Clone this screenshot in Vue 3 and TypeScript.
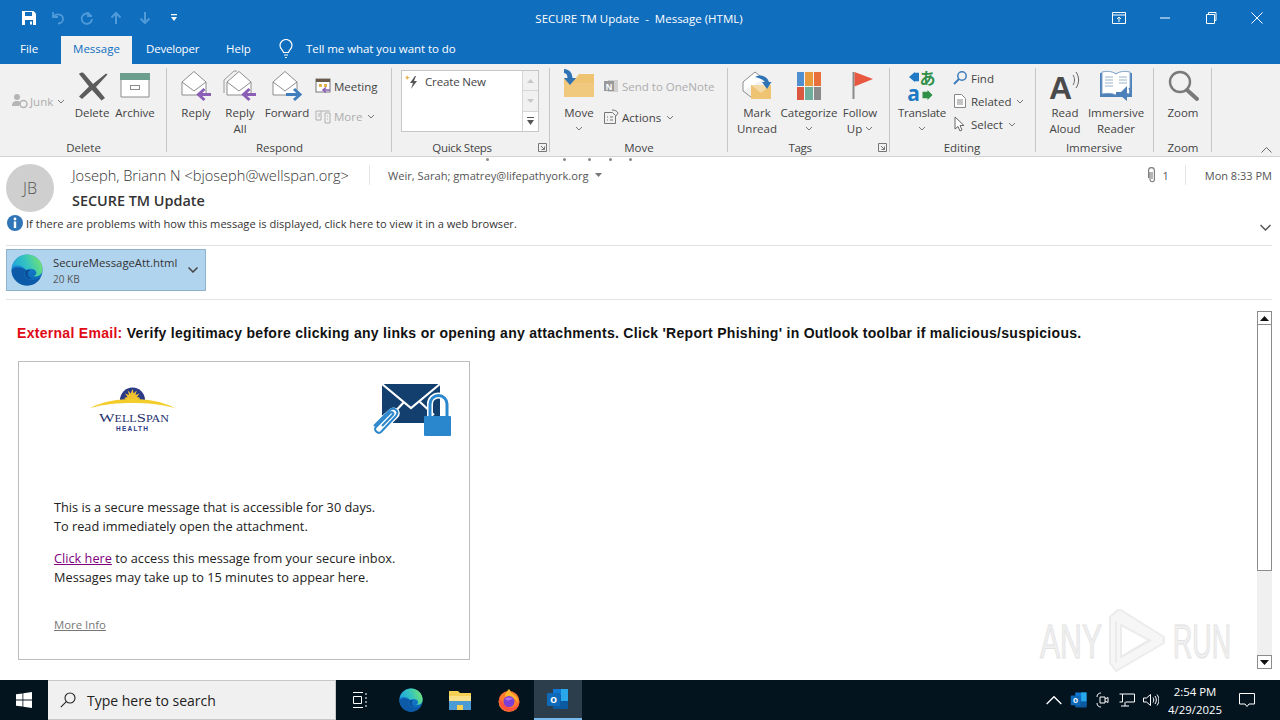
<template>
  <div class="outlook">
    <!-- shared artwork -->
    <svg class="defs" aria-hidden="true">
      <defs>
        <linearGradient id="edgeBase" x1="0" y1="0" x2="0.6" y2="1">
          <stop offset="0" stop-color="#1f9ae0" />
          <stop offset="1" stop-color="#0c66b8" />
        </linearGradient>
        <linearGradient id="edgeWave" x1="0" y1="0.6" x2="1" y2="0.3">
          <stop offset="0" stop-color="#1fa4dc" />
          <stop offset="0.5" stop-color="#35c4c0" />
          <stop offset="1" stop-color="#74e46e" />
        </linearGradient>
        <symbol id="edge" viewBox="0 0 32 32">
          <circle cx="16" cy="16" r="15.5" fill="url(#edgeBase)" />
          <path d="M.6 17C1 25 8 31.500 16 31.500c6 0 11-3 13.500-8-4 3-11 3.500-14.500.5-3-2.500-2.500-6 0-8-5.500-4-13.500-3.500-14.400.5z" fill="#0d5aa8" />
          <path d="M1 13C3 6 9 .5 16 .5c9 0 15.500 7 15.500 15 0 5-4.500 8-9 6.500 2.500-.5 3.500-2.500 2.500-4.500-1.500-3-6.500-3.500-10-1.500C12 12 6 10 1 13z" fill="url(#edgeWave)" />
          <path d="M15 16c-2 2-2 5.500.5 7.500 1.500 1.200 4 1.700 6.500 1.500-3-.5-5-2.500-5-5 0-1.800 1-3 2.500-4z" fill="#0b4f98" />
        </symbol>
        <symbol id="outlook" viewBox="0 0 24 24">
          <rect x="7" y="2" width="15" height="18" fill="#0f78d4" />
          <rect x="15" y="2" width="7" height="6" fill="#28a8ea" />
          <rect x="7" y="8" width="8" height="6" fill="#0a63b0" />
          <rect x="15" y="8" width="7" height="6" fill="#28a8ea" />
          <path d="M7 14h15v8H7z" fill="#0b5a9f" />
          <rect x="1" y="6" width="13" height="13" rx="1" fill="#0e69b8" />
          <text x="7.500" y="16.200" text-anchor="middle" class="outlook-o">o</text>
        </symbol>
      </defs>
    </svg>

    <!-- title bar -->
    <header class="titlebar">
      <div class="qat">
        <svg class="qat-icon" viewBox="0 0 16 16"><path d="M1 1h11.500L15 3.500V15H1z" fill="#fff" /><path d="M4 2h7v4H4zM4 10h8v5H4z" fill="#106ebe" /><path d="M9 11.500h2v3H9z" fill="#fff" /></svg>
        <svg class="qat-icon" viewBox="0 0 16 16" fill="none" stroke="#4f9ad8" stroke-width="1.800"><path d="M3 2v5h5" /><path d="M3.500 6.500C6 3.500 13 3.500 13 9c0 3-2.500 4.500-5 4.500" /></svg>
        <svg class="qat-icon" viewBox="0 0 16 16" fill="none" stroke="#4f9ad8" stroke-width="1.800"><path d="M9 2v4h4" /><path d="M11.500 5A5.200 5.200 0 1 0 13 9" /></svg>
        <svg class="qat-icon" viewBox="0 0 16 16" fill="none" stroke="#4f9ad8" stroke-width="2"><path d="M8 14V3M3.500 7.500 8 3l4.500 4.500" /></svg>
        <svg class="qat-icon" viewBox="0 0 16 16" fill="none" stroke="#4f9ad8" stroke-width="2"><path d="M8 2v11M3.500 8.500 8 13l4.500-4.500" /></svg>
        <svg class="qat-icon qat-last" viewBox="0 0 16 16"><path d="M5 4h6v1.200H5zM5 7h6L8 11z" fill="#fff" /></svg>
      </div>
      <div class="title">SECURE TM Update&nbsp; -&nbsp; Message (HTML)</div>
      <div class="winctl">
        <svg class="win-icon" viewBox="0 0 14 12" fill="none" stroke="#fff"><path d="M.5.500h13v11H.5zM.5 3h13M7 10V5M5 7l2-2 2 2" /></svg>
        <svg class="win-icon" viewBox="0 0 14 12" fill="none" stroke="#fff"><path d="M2 6h10" /></svg>
        <svg class="win-icon" viewBox="0 0 14 12" fill="none" stroke="#fff"><path d="M2.500 2.500h8v9h-8zM4.500 2.500V.5h7.500v8h-1.500" /></svg>
        <svg class="win-icon" viewBox="0 0 14 12" fill="none" stroke="#fff"><path d="M1.500.5 12.500 11.500M12.500.5 1.500 11.500" /></svg>
      </div>
    </header>

    <!-- tabs -->
    <nav class="tabs">
      <span class="tab tab-file">File</span>
      <span class="tab tab-active">Message</span>
      <span class="tab tab-dev">Developer</span>
      <span class="tab tab-help">Help</span>
      <svg class="bulb" viewBox="0 0 16 20" fill="none" stroke="#fff" stroke-width="1.200"><path d="M5.500 13.500C5 11 2 9.500 2 6.500a6 6 0 0 1 12 0c0 3-3 4.500-3.500 7zM6 16h4M7 18.500h2" /></svg>
      <span class="tab tell">Tell me what you want to do</span>
    </nav>

    <!-- ribbon -->
    <section class="ribbon">
      <div class="group g-delete">
        <div class="g-body">
          <div class="small off junk">
            <svg class="s-icon" viewBox="0 0 16 16" fill="#b5b5b5"><circle cx="5" cy="4" r="3" /><path d="M0 13c0-4 2-5 5-5 2 0 3 .5 4 1.500L7 13z" /><circle cx="11.500" cy="11" r="3.500" fill="none" stroke="#b5b5b5" stroke-width="1.500" /></svg>
            <span>Junk</span><svg class="caret" viewBox="0 0 8 5"><path d="M1 1l3 3 3-3" /></svg>
          </div>
          <div class="big w-delete">
            <svg class="b-icon" viewBox="0 0 34 34"><path d="M4 5c2-2 4-2 5-.5l9 10.500L31 4.500l1.500 1L21 18l9 11-3.500 2.500L17 21 7 30l-3-2.500L14 17.500z" fill="#5c5c5c" /></svg>
            <span class="lbl">Delete</span>
          </div>
          <div class="big w-archive">
            <svg class="b-icon" viewBox="0 0 34 34"><rect x="2" y="4" width="30" height="7" fill="#6b9e8c" /><path d="M3 11v17h28V11" fill="#fff" stroke="#8a8a8a" /><rect x="12.500" y="16.500" width="9" height="4" fill="none" stroke="#8a8a8a" /></svg>
            <span class="lbl">Archive</span>
          </div>
        </div>
        <div class="g-label">Delete</div>
      </div>

      <div class="group g-respond">
        <div class="g-body">
          <div class="big w-reply">
            <svg class="b-icon" viewBox="0 0 34 34"><path d="M3 26V13L15 2.500 27 13v13z" fill="#fff" stroke="#8d8d8d" /><path d="M3 13l12 9 12-9" fill="none" stroke="#8d8d8d" /><path d="M32 25.500H20M25.500 20l-6 5.500 6 5.500" fill="none" stroke="#8a5fb5" stroke-width="3" /></svg>
            <span class="lbl">Reply</span>
          </div>
          <div class="big w-reply">
            <svg class="b-icon" viewBox="0 0 34 34"><path d="M1 24V11L11 2l3 0" fill="none" stroke="#9a9a9a" /><path d="M4 26V13L16 2.500 28 13v13z" fill="#fff" stroke="#8d8d8d" /><path d="M4 13l12 9 12-9" fill="none" stroke="#8d8d8d" /><path d="M33 25.500H21M26.500 20l-6 5.500 6 5.500" fill="none" stroke="#8a5fb5" stroke-width="3" /></svg>
            <span class="lbl">Reply<br />All</span>
          </div>
          <div class="big w-forward">
            <svg class="b-icon" viewBox="0 0 34 34"><path d="M3 26V13L15 2.500 27 13v13z" fill="#fff" stroke="#8d8d8d" /><path d="M3 13l12 9 12-9" fill="none" stroke="#8d8d8d" /><path d="M16 25.500h13M24 20l6 5.500-6 5.500" fill="none" stroke="#3f7dbd" stroke-width="3" /></svg>
            <span class="lbl">Forward</span>
          </div>
          <div class="s-col s-col-respond">
            <div class="small">
              <svg class="s-icon" viewBox="0 0 16 16"><rect x="1" y="1" width="14" height="13" fill="#fff" stroke="#777" /><rect x="1" y="1" width="14" height="3" fill="#6a5a4a" /><path d="M4 6h3v3H4zM9 6h3v3H9z" fill="#e6b04a" /><path d="M15 12H8M11 9.500 8 12l3 2.500" fill="none" stroke="#8a5fb5" stroke-width="1.600" /></svg>
              <span>Meeting</span>
            </div>
            <div class="small off">
              <svg class="s-icon" viewBox="0 0 16 16" fill="none" stroke="#b0b0b0"><path d="M1 3h14M1 3v9h5V3M10 5h5v10h-5zM3 6h2M3 8h2M12 8h1M12 11h1" /></svg>
              <span>More</span><svg class="caret" viewBox="0 0 8 5"><path d="M1 1l3 3 3-3" /></svg>
            </div>
          </div>
        </div>
        <div class="g-label">Respond</div>
      </div>

      <div class="group g-quick">
        <div class="g-body">
          <div class="gallery">
            <div class="gallery-list">
              <svg class="bolt" viewBox="0 0 16 16"><path d="M2 1l1 2 2 .5-2 1L2 6l-.5-1.500L0 3.500l1.500-.5z" fill="#e8b04a" /><path d="M10 2 5 9h3l-2 6 6-8H9l2-5z" fill="#555" /></svg>
              <span>Create New</span>
            </div>
            <div class="gallery-scroll">
              <span class="gs-btn"><svg viewBox="0 0 7 4"><path d="M0 4l3.500-4L7 4z" fill="#c8c8c8" /></svg></span>
              <span class="gs-btn"><svg viewBox="0 0 7 4"><path d="M0 0l3.500 4L7 0z" fill="#c8c8c8" /></svg></span>
              <span class="gs-btn"><svg viewBox="0 0 7 8"><path d="M0 0h7v1H0zM0 3h7L3.500 8z" fill="#555" /></svg></span>
            </div>
          </div>
        </div>
        <div class="g-label g-label-launch">Quick Steps</div>
        <svg class="launcher" viewBox="0 0 9 9" fill="none" stroke="#777"><path d="M.5 8.500V.5h8v8zM3 3l3.500 3.500M6.500 3.500v3h-3" /></svg>
      </div>

      <div class="group g-move">
        <div class="g-body">
          <div class="big w-move">
            <svg class="b-icon" viewBox="0 0 34 34"><path d="M2 9h12l3-4h15v23H2z" fill="#eec372" /><path d="M2 14h30v14H2z" fill="#f0c97f" /><path d="M2 0c6 .5 8 4 8.500 9H14l-6 7-6-7h3.500C5.500 6 4.500 4.500 2 4z" fill="#2f73b5" /></svg>
            <span class="lbl">Move<br /><svg class="caret" viewBox="0 0 8 5"><path d="M1 1l3 3 3-3" /></svg></span>
          </div>
          <div class="s-col s-col-move">
            <div class="small off">
              <svg class="s-icon" viewBox="0 0 16 16"><rect x="5" y="2" width="10" height="12" fill="#d0d0d0" /><rect x="1" y="3" width="10" height="10" fill="#9a9a9a" /><text x="6" y="11.500" text-anchor="middle" class="note-n">N</text></svg>
              <span>Send to OneNote</span>
            </div>
            <div class="small">
              <svg class="s-icon" viewBox="0 0 16 16" fill="none" stroke="#777"><path d="M1.500 3.500h8l3 3v8h-11zM4 8h1M7 8h3M4 11h1M7 11h3" /><path d="M9 1c3 0 5 1 6 3l-2 3" /></svg>
              <span>Actions</span><svg class="caret" viewBox="0 0 8 5"><path d="M1 1l3 3 3-3" /></svg>
            </div>
          </div>
        </div>
        <div class="g-label">Move</div>
      </div>

      <div class="group g-tags">
        <div class="g-body">
          <div class="big w-mark">
            <svg class="b-icon" viewBox="0 0 34 34"><path d="M3 22V13L15 3l9 7" fill="#fff" stroke="#8d8d8d" /><path d="M3 22l8 6" stroke="#8d8d8d" /><path d="M11 16h20v14H11z" fill="#eec372" /><path d="M11 16l10 8 10-8" fill="#f5d9a5" /><path d="M15 8c6-3 12-1 14 5h2.500L27 20l-5-7h3c-1.500-2.500-5-3.500-10-5z" fill="#2f73b5" /></svg>
            <span class="lbl">Mark<br />Unread</span>
          </div>
          <div class="big w-cat">
            <div class="cat-grid"><i v-for="c in categoryColours" :key="c" :style="{ background: c }" /></div>
            <span class="lbl">Categorize<br /><svg class="caret" viewBox="0 0 8 5"><path d="M1 1l3 3 3-3" /></svg></span>
          </div>
          <div class="big w-follow">
            <svg class="b-icon" viewBox="0 0 34 34"><path d="M9.500 3h2v27h-2z" fill="#8a8a8a" /><path d="M11.500 3 30 10l-18.500 7.500z" fill="#e8573f" /></svg>
            <span class="lbl">Follow<br />Up <svg class="caret" viewBox="0 0 8 5"><path d="M1 1l3 3 3-3" /></svg></span>
          </div>
        </div>
        <div class="g-label g-label-launch">Tags</div>
        <svg class="launcher launcher-tags" viewBox="0 0 9 9" fill="none" stroke="#777"><path d="M.5 8.500V.5h8v8zM3 3l3.500 3.500M6.500 3.500v3h-3" /></svg>
      </div>

      <div class="group g-edit">
        <div class="g-body">
          <div class="big w-translate">
            <div class="tr-icon">
              <svg class="tr-arrow" viewBox="0 0 12 12"><path d="M12 1v10H7v1L0 6l7-6v1z" fill="#1f79c4" /></svg>
              <span class="tr-jp">あ</span>
              <span class="tr-a">a</span>
              <svg class="tr-arrow tr-arrow-low" viewBox="0 0 12 12"><path d="M0 2h6V0l6 6-6 6v-2H0z" fill="#2f8f46" /></svg>
            </div>
            <span class="lbl lbl-tight">Translate<br /><svg class="caret" viewBox="0 0 8 5"><path d="M1 1l3 3 3-3" /></svg></span>
          </div>
          <div class="s-col s-col-edit">
            <div class="small">
              <svg class="s-icon" viewBox="0 0 16 16" fill="none"><circle cx="10" cy="6" r="4.200" stroke="#3f7dbd" stroke-width="1.500" /><path d="M7 9l-5 5" stroke="#3f7dbd" stroke-width="2" /></svg>
              <span>Find</span>
            </div>
            <div class="small">
              <svg class="s-icon" viewBox="0 0 16 16" fill="#fff" stroke="#888"><path d="M2.500 1.500h7l4 4v9h-11z" /><path d="M5 7h6M5 9h6M5 11h6" fill="none" /></svg>
              <span>Related</span><svg class="caret" viewBox="0 0 8 5"><path d="M1 1l3 3 3-3" /></svg>
            </div>
            <div class="small">
              <svg class="s-icon" viewBox="0 0 16 16" fill="#fff" stroke="#666"><path d="M3 1v12l3-2.500 2 4.500 2-1-2-4.500h4z" /></svg>
              <span>Select</span><svg class="caret" viewBox="0 0 8 5"><path d="M1 1l3 3 3-3" /></svg>
            </div>
          </div>
        </div>
        <div class="g-label g-label-edit">Editing</div>
      </div>

      <div class="group g-imm">
        <div class="g-body">
          <div class="big w-read">
            <div class="read-icon">
              <span class="read-a">A</span>
              <svg class="read-waves" viewBox="0 0 8 20" fill="none" stroke="#666"><path d="M1 5c2 3 2 7 0 10M4 2c3.500 5 3.500 11 0 16" /></svg>
            </div>
            <span class="lbl">Read<br />Aloud</span>
          </div>
          <div class="big w-imm">
            <svg class="b-icon" viewBox="0 0 34 34">
              <path d="M1 4h32v24H1z" fill="#4d80b8" />
              <path d="M3 3c5-1 10-1 14 2 4-3 9-3 14-2v22c-5-1-10-1-14 1-4-2-9-2-14-1z" fill="#fff" stroke="#7da2c9" />
              <path d="M6 8h8M6 11h8M6 14h8M6 17h8M20 8h8M20 11h8M20 14h8" stroke="#9ab1c9" />
              <path d="M17 23h5l6-6v15l-6-5h-5z" fill="#4d80b8" />
              <path d="M30 19c1.500 2 1.500 5 0 8" fill="none" stroke="#4d80b8" stroke-width="1.400" />
            </svg>
            <span class="lbl">Immersive<br />Reader</span>
          </div>
        </div>
        <div class="g-label g-label-edit">Immersive</div>
      </div>

      <div class="group g-zoom">
        <div class="g-body">
          <div class="big w-zoom">
            <svg class="b-icon" viewBox="0 0 34 34" fill="none"><circle cx="14" cy="13" r="10" stroke="#7a7a7a" stroke-width="2.400" /><path d="M21 21l10 9" stroke="#7a7a7a" stroke-width="4" stroke-linecap="round" /></svg>
            <span class="lbl">Zoom</span>
          </div>
        </div>
        <div class="g-label">Zoom</div>
      </div>

      <svg class="collapse" viewBox="0 0 11 6" fill="none" stroke="#666"><path d="M.5 5.500l5-5 5 5" /></svg>
    </section>

    <!-- message header -->
    <section class="msg-head">
      <i v-for="x in stray" :key="x" class="stray" :style="{ left: x + 'px' }" />
      <div class="head-top">
        <div class="avatar">JB</div>
        <div class="head-main">
          <div class="head-line">
            <span class="sender">Joseph, Briann N &lt;bjoseph@wellspan.org&gt;</span>
            <span class="rule" />
            <span class="recip">Weir, Sarah; gmatrey@lifepathyork.org</span>
            <svg class="tri" viewBox="0 0 7 4"><path d="M0 0h7L3.500 4z" fill="#777" /></svg>
            <span class="head-right">
              <svg class="clip" viewBox="0 0 10 16" fill="none" stroke="#777" stroke-width="1.100"><path d="M3 5v7.500a2.200 2.200 0 0 0 4.400 0V3.500a2.800 2.800 0 0 0-5.800 0V11M5 5v7" /></svg>
              <span class="count">1</span>
              <span class="rule" />
              <span class="date">Mon 8:33 PM</span>
            </span>
          </div>
          <div class="subject">SECURE TM Update</div>
        </div>
      </div>
      <div class="info">
        <svg class="info-icon" viewBox="0 0 16 16"><circle cx="8" cy="8" r="8" fill="#2f75b8" /><circle cx="8" cy="4" r="1.400" fill="#fff" /><path d="M6.800 6.500h2.400V13H6.800z" fill="#fff" /></svg>
        <span>If there are problems with how this message is displayed, click here to view it in a web browser.</span>
        <svg class="expand" viewBox="0 0 11 7" fill="none" stroke="#555" stroke-width="1.500"><path d="M.5 1l5 5 5-5" /></svg>
      </div>
    </section>

    <section class="attach-row">
      <div class="attach">
        <svg class="attach-icon"><use href="#edge" /></svg>
        <div class="attach-text">
          <div class="attach-name">SecureMessageAtt.html</div>
          <div class="attach-size">20 KB</div>
        </div>
        <svg class="attach-caret" viewBox="0 0 10 6" fill="none" stroke="#444" stroke-width="1.500"><path d="M.5.500l4.500 4.500L9.500.5" /></svg>
      </div>
    </section>

    <!-- message body -->
    <main class="body">
      <div class="content">
        <p class="warn"><b>External Email:</b> Verify legitimacy before clicking any links or opening any attachments. Click 'Report Phishing' in Outlook toolbar if malicious/suspicious.</p>
        <div class="card">
          <div class="card-head">
            <svg class="logo" viewBox="0 0 86 48">
              <path d="M30 15a12.500 12.500 0 0 1 25 0z" fill="#2b3a86" />
              <path d="M42.500 4l1.200 4.500 3-3-1.200 4.500 4-1.500-2.500 3.500 3 .8-.5 1.200H35l-.5-1.200 3-.8-2.500-3.500 4 1.500-1.200-4.500 3 3z" fill="#f2c12e" />
              <path d="M0 23C14 16 28 14 42.500 14S71 16 85 23C70 19 57 18 42.500 18S15 19 0 23z" fill="#f3cd2b" />
              <text x="9" y="37" textLength="70" lengthAdjust="spacingAndGlyphs" class="logo-name"><tspan class="logo-cap">W</tspan>ELL<tspan class="logo-cap">S</tspan>PAN</text>
              <text x="26" y="45.500" textLength="32" class="logo-health">HEALTH</text>
            </svg>
            <svg class="secure-art" viewBox="0 0 80 53">
              <rect x="10" y="1" width="58" height="39" fill="#123f6d" />
              <path d="M10 1l29 24 29-24M20 32l12-13M48 19l14 13" fill="none" stroke="#fff" stroke-width="2.200" />
              <path d="M1 44 19 28c3-3 9 1 5 5L9 48c-3 2.500-7-1-4-4l14-14" fill="none" stroke="#fff" stroke-width="5" />
              <path d="M2 43 18 27c4-3 10 1 6 6L9 49c-3 2.500-8-2-5-5l14-14c2-2 4 0 3 1.500L10 43" fill="none" stroke="#2b87cd" stroke-width="2" />
              <path d="M58 33V21a8.500 8.500 0 0 1 17 0v12" fill="none" stroke="#fff" stroke-width="6" />
              <path d="M58 33V21a8.500 8.500 0 0 1 17 0v12" fill="none" stroke="#2b87cd" stroke-width="3" />
              <rect x="52" y="33" width="27" height="20" rx="1" fill="#2b87cd" />
            </svg>
          </div>
          <div class="card-text">
            <p>This is a secure message that is accessible for 30 days.<br />To read immediately open the attachment.</p>
            <p class="p2"><a class="link">Click here</a> to access this message from your secure inbox.<br />Messages may take up to 15 minutes to appear here.</p>
            <p class="more"><a>More Info</a></p>
          </div>
        </div>
      </div>
      <div class="scrollbar">
        <span class="sb-btn"><svg viewBox="0 0 9 5"><path d="M0 5l4.500-5L9 5z" fill="#111" /></svg></span>
        <span class="sb-thumb" />
        <span class="sb-track" />
        <span class="sb-btn"><svg viewBox="0 0 9 5"><path d="M0 0l4.500 5L9 0z" fill="#111" /></svg></span>
      </div>
      <svg class="watermark" viewBox="0 0 210 64">
        <text x="3" y="49" textLength="62" lengthAdjust="spacingAndGlyphs" class="wm-text">ANY</text>
        <path d="M73 8v46l6 8 48-28v-6L82 0zM84 16l28 15-28 17z" fill="#f6f6f6" stroke="#ececec" stroke-width="2" />
        <path d="M79 12v42M84 48l30-17" fill="none" stroke="#e9e9e9" stroke-width="1.500" />
        <text x="136" y="49" textLength="58" lengthAdjust="spacingAndGlyphs" class="wm-text">RUN</text>
      </svg>
    </main>

    <!-- taskbar -->
    <footer class="taskbar">
      <div class="start">
        <svg viewBox="0 0 16 16" fill="#fff"><path d="M0 2.300 6.500 1.400v6.200H0zM7.300 1.300 16 0v7.600H7.300zM0 8.400h6.500v6.200L0 13.700zM7.300 8.400H16V16l-8.700-1.300z" /></svg>
      </div>
      <div class="search">
        <svg viewBox="0 0 16 16" fill="none" stroke="#222" stroke-width="1.100"><circle cx="10" cy="6" r="5" /><path d="M6.300 9.700.8 15.200" /></svg>
        <span>Type here to search</span>
      </div>
      <div class="task-apps">
        <span class="app">
          <svg class="app-svg" viewBox="0 0 16 16" fill="none" stroke="#fff"><path d="M1 .5h10M1 15.500h10M1.500 4.500h8v7h-8zM14 1v2M14 5v2M14 9v2M14 13v2" /></svg>
        </span>
        <span class="app app-edge"><svg class="app-svg big-app"><use href="#edge" /></svg></span>
        <span class="app">
          <svg class="app-svg folder" viewBox="0 0 24 22"><path d="M1 2h9l2 2h11v17H1z" fill="#f6cf55" /><path d="M1 7h22v14H1z" fill="#fbe08a" /><path d="M1 12h22v9H1z" fill="#4a9ad4" /><path d="M9 16h6v5H9z" fill="#f6cf55" /></svg>
        </span>
        <span class="app">
          <svg class="app-svg big-app" viewBox="0 0 24 24"><circle cx="12" cy="13.500" r="10.500" fill="#ff7a2f" /><path d="M12 1c2 2 1 3 4 5s5 4 5 8c-3-4-6-4-9-3S5 8 12 1z" fill="#ffb52e" /><path d="M2 10c0 6 3 13 10 13 6 0 10-4 10.500-9C20 19 15 21 11 19 7 17 5 14 2 10z" fill="#ff4f3e" /><circle cx="12" cy="13.500" r="5.500" fill="#7b3fd6" /><path d="M8 11c2-2 6-2 8 0-2 .5-4 .5-5 2-1-.5-2-1.200-3-2z" fill="#ba6de8" /></svg>
        </span>
        <span class="app app-active"><svg class="app-svg big-app"><use href="#outlook" /></svg></span>
      </div>
      <div class="tray">
        <svg class="tray-i" viewBox="0 0 12 7" fill="none" stroke="#fff"><path d="M.5 6.500 6 1l5.500 5.500" /></svg>
        <svg class="tray-i tray-ol"><use href="#outlook" /></svg>
        <svg class="tray-i" viewBox="0 0 14 16" fill="none" stroke="#fff"><path d="M1 5C1 2 3 1 5 1M1 11c0 3 2 4 4 4M4 5h5v6H4zM9 7l3-1.500v5L9 9" /></svg>
        <svg class="tray-i" viewBox="0 0 16 15" fill="none" stroke="#fff"><path d="M.5 1.500h3v8h-3M3.500 1.500H15.500v8h-9M6 9.500v4M2 13.500h8" /></svg>
        <svg class="tray-i" viewBox="0 0 16 14" fill="none" stroke="#fff"><path d="M.5 5h3l4-3.500v11l-4-3.500h-3zM10 4.500c1 1.500 1 3.500 0 5M12 3c1.800 2.500 1.800 5.500 0 8M14 1.500c2.500 3.500 2.500 7.500 0 11" /></svg>
        <div class="clock"><span>2:54 PM</span><span>4/29/2025</span></div>
        <svg class="notify" viewBox="0 0 16 14" fill="none" stroke="#fff"><path d="M.5.500h15v10.500H10l-2 2.500-2-2.500H.5z" /></svg>
      </div>
    </footer>
  </div>
</template>

<script setup lang="ts">
// 2x3 swatches of the Categorize button
const categoryColours: string[] = ['#4f8fd0', '#e89a3c', '#e8703c', '#d9583f', '#6fae9c', '#8a8a8a'];

// little marks just under the ribbon
const stray: number[] = [487, 564, 589, 610, 630];
</script>

<style>
html,
body {
  margin: 0;
  background: #fff;
}
</style>

<style scoped>
.outlook {
  width: 1280px;
  height: 720px;
  display: flex;
  flex-direction: column;
  overflow: hidden;
  font-family: "Open Sans", "Noto Sans", sans-serif;
  font-size: 11.5px;
  color: #444;
}

.defs {
  position: absolute;
  width: 0;
  height: 0;
}

.outlook-o {
  font: bold 11px "Liberation Sans", sans-serif;
  fill: #fff;
}

/* title bar */
.titlebar {
  height: 36px;
  flex: none;
  background: #106ebe;
  display: grid;
  grid-template-columns: 1fr auto 1fr;
  align-items: center;
  color: #fff;
}

.qat {
  display: flex;
  align-items: center;
  padding-left: 21px;
  gap: 13px;
}

.qat-icon {
  width: 16px;
  height: 16px;
}

.title {
  margin-right: 2px;
  font-size: 11.5px;
  color: #fff;
}

.winctl {
  display: flex;
  justify-content: flex-end;
}

.win-icon {
  width: 46px;
  height: 12px;
}

/* tabs */
.tabs {
  height: 28px;
  flex: none;
  background: #106ebe;
  display: flex;
  align-items: stretch;
  color: #fff;
}

.tab {
  display: flex;
  align-items: center;
  padding-bottom: 4px;
  box-sizing: border-box;
  font-size: 11.5px;
}

.tab-file {
  padding-left: 20px;
  width: 61px;
}

.tab-active {
  width: 71px;
  justify-content: center;
  background: #f1f1f1;
  color: #106ebe;
}

.tab-dev {
  margin-left: 14px;
  width: 53px;
  letter-spacing: -0.2px;
}

.tab-help {
  margin-left: 27px;
  width: 26px;
}

.bulb {
  width: 16px;
  height: 20px;
  margin: 3px 0 0 26px;
}

.tell {
  margin-left: 12px;
  letter-spacing: -0.06px;
}

/* ribbon */
.ribbon {
  position: relative;
  height: 93px;
  flex: none;
  box-sizing: border-box;
  background: #f1f1f1;
  border-bottom: 1px solid #d2d2d2;
  display: flex;
}

.group {
  position: relative;
  display: flex;
  flex-direction: column;
  box-sizing: border-box;
}

.group::after {
  content: "";
  position: absolute;
  right: 0;
  top: 4px;
  bottom: 4px;
  width: 1px;
  background: #c6c6c6;
}

.g-body {
  height: 76px;
  display: flex;
}

.g-label {
  text-align: center;
  line-height: 15px;
}

.g-label-launch {
  padding-right: 18px;
  letter-spacing: -0.3px;
}

.g-label-edit {
  padding-right: 2px;
}

.g-delete { width: 167px; }
.g-delete .g-body { padding-left: 10px; }
.g-respond { width: 225px; }
.g-respond .g-body { padding-left: 7px; }
.g-quick { width: 158px; }
.g-move { width: 178px; }
.g-move .g-body { padding-left: 7px; }
.g-tags { width: 162px; }
.g-tags .g-body { padding-left: 3px; }
.g-edit { width: 146px; }
.g-edit .g-body { padding-left: 6px; }
.g-imm { width: 118px; }
.g-imm .g-body { padding-left: 6px; }
.g-zoom { width: 58px; }
.g-zoom .g-body { padding-left: 6px; }

.big {
  display: flex;
  flex-direction: column;
  align-items: center;
  padding-top: 5px;
  text-align: center;
}

.b-icon {
  width: 34px;
  height: 34px;
  flex: none;
  margin-bottom: 2px;
}

.lbl {
  line-height: 15.5px;
  white-space: nowrap;
}

.lbl-tight {
  letter-spacing: -0.2px;
}

.w-delete { width: 40px; margin-left: 1px; }
.w-archive { width: 46px; }
.w-reply { width: 44px; }
.w-forward { width: 50px; }
.w-move { width: 44px; }
.w-mark { width: 52px; }
.w-cat { width: 52px; }
.w-follow { width: 50px; }
.w-translate { width: 52px; }
.w-read { width: 46px; }
.w-imm { width: 56px; }
.w-zoom { width: 46px; }

.caret {
  width: 8px;
  height: 5px;
  fill: none;
  stroke: #777;
  vertical-align: 2px;
}

.small {
  display: flex;
  align-items: center;
  gap: 3px;
  white-space: nowrap;
}

.small .caret {
  margin-left: 2px;
  vertical-align: middle;
}

.off {
  color: #adadad;
}

.s-icon {
  width: 16px;
  height: 16px;
  flex: none;
}

.junk {
  width: 59px;
  height: 16px;
  margin: 29px 0 0 2px;
  gap: 2px;
}

.s-col {
  display: flex;
  flex-direction: column;
}

.s-col-respond {
  margin-left: 3px;
  padding-top: 14px;
  gap: 14px;
}

.s-col-move {
  margin-left: 2px;
  padding-top: 14px;
  gap: 15px;
}

.s-col-edit {
  margin-left: 4px;
  padding-top: 6px;
  gap: 7px;
}

.gallery {
  margin: 6px 0 0 9px;
  width: 138px;
  height: 62px;
  box-sizing: border-box;
  display: flex;
  border: 1px solid #c6c6c6;
  background: #fff;
}

.gallery-list {
  flex: 1;
  display: flex;
  align-items: flex-start;
  gap: 4px;
  padding: 3px 0 0 3px;
  letter-spacing: -0.15px;
}

.bolt {
  width: 16px;
  height: 16px;
  flex: none;
}

.gallery-scroll {
  width: 15px;
  display: flex;
  flex-direction: column;
  border-left: 1px solid #d6d6d6;
  background: #f1f1f1;
}

.gs-btn {
  flex: 1;
  display: flex;
  align-items: center;
  justify-content: center;
  border-bottom: 1px solid #d6d6d6;
}

.gs-btn:last-child {
  border-bottom: 0;
  background: #fff;
}

.gs-btn svg {
  width: 7px;
  height: 8px;
}

.launcher {
  position: absolute;
  right: 3px;
  bottom: 4px;
  width: 9px;
  height: 9px;
}

.cat-grid {
  width: 24px;
  height: 28px;
  margin: 3px 0 5px;
  flex: none;
  display: grid;
  grid-template-columns: repeat(3, 1fr);
  grid-template-rows: repeat(2, 1fr);
  gap: 1px;
}

.tr-icon {
  width: 28px;
  height: 34px;
  margin-bottom: 2px;
  flex: none;
  display: grid;
  grid-template-columns: 11px 17px;
  grid-template-rows: 16px 16px;
  align-items: center;
  justify-items: center;
}

.tr-arrow {
  width: 10px;
  height: 10px;
}

.tr-arrow-low {
  width: 13px;
  margin-top: 4px;
}

.tr-jp {
  font: bold 16px/16px "Noto Sans CJK JP", sans-serif;
  color: #2f8f46;
}

.tr-a {
  font: bold 21px/16px "Noto Sans", sans-serif;
  color: #1f79c4;
}

.read-icon {
  width: 32px;
  height: 34px;
  margin-bottom: 2px;
  flex: none;
  display: flex;
  align-items: flex-start;
}

.read-a {
  padding-top: 4px;
  font: bold 32px/30px "Liberation Sans", sans-serif;
  color: #4a4a4a;
}

.read-waves {
  width: 8px;
  height: 20px;
  margin-top: 1px;
  flex: none;
}

.note-n {
  font: bold 9px "Liberation Sans", sans-serif;
  fill: #fff;
}

.collapse {
  position: absolute;
  right: 8px;
  bottom: 3px;
  width: 11px;
  height: 6px;
}

/* message header */
.msg-head {
  position: relative;
  height: 89px;
  flex: none;
  margin: 0 8px 0 6px;
  box-sizing: border-box;
  border-bottom: 1px solid #e2e2e2;
}

.stray {
  position: absolute;
  top: 1px;
  width: 3px;
  height: 3px;
  margin-left: -7px;
  border-radius: 50%;
  background: #8a8a8a;
}

.head-top {
  height: 58px;
  display: flex;
}

.avatar {
  width: 48px;
  height: 48px;
  flex: none;
  margin: 7px 18px 0 0;
  border-radius: 50%;
  background: #cfcfcf;
  display: flex;
  align-items: center;
  justify-content: center;
  font-size: 16px;
  font-weight: 300;
  color: #555;
}

.head-main {
  flex: 1;
  padding-top: 9px;
}

.head-line {
  height: 18px;
  display: flex;
  align-items: center;
}

.sender {
  font-size: 14.6px;
  font-weight: 300;
  color: #333;
}

.rule {
  width: 1px;
  height: 20px;
  margin: 0 18px 0 20px;
  background: #e4e4e4;
}

.recip {
  font-size: 11.15px;
  color: #555;
}

.tri {
  width: 7px;
  height: 4px;
  margin-left: 6px;
}

.head-right {
  margin-left: auto;
  display: flex;
  align-items: center;
  font-size: 11px;
  color: #555;
}

.clip {
  width: 10px;
  height: 16px;
}

.count {
  margin-left: 5px;
}

.head-right .rule {
  margin: 0 19px 0 16px;
}

.subject {
  margin-top: 7px;
  font-size: 14.4px;
  font-weight: 600;
  color: #333;
}

.info {
  display: flex;
  align-items: center;
  gap: 3px;
  padding-left: 1px;
  height: 16px;
  font-size: 11.1px;
  color: #333;
}

.info-icon {
  width: 16px;
  height: 16px;
}

.expand {
  margin: 9px 1px 0 auto;
  width: 11px;
  height: 7px;
}

.attach-row {
  height: 54px;
  flex: none;
  margin: 0 8px 0 6px;
  box-sizing: border-box;
  border-bottom: 1px solid #e2e2e2;
  padding-top: 3px;
}

.attach {
  width: 200px;
  height: 42px;
  box-sizing: border-box;
  border: 1px solid #8fb2cd;
  background: #b0d4ee;
  display: flex;
  align-items: center;
  padding-left: 4px;
}

.attach-icon {
  width: 32px;
  height: 32px;
  flex: none;
}

.attach-text {
  margin: 2px 0 0 10px;
  line-height: 16px;
  font-size: 11.3px;
  color: #333;
}

.attach-size {
  font-size: 10px;
  color: #555;
}

.attach-caret {
  margin-left: auto;
  margin-right: 7px;
  width: 10px;
  height: 6px;
}

/* message body */
.body {
  position: relative;
  flex: 1;
  min-height: 0;
  display: flex;
  overflow: hidden;
}

.content {
  flex: 1;
  padding: 25px 0 0 17px;
}

.warn {
  margin: 0 0 20px;
  font: bold 14px/16px "Liberation Sans", sans-serif;
  letter-spacing: 0.295px;
  color: #111;
  white-space: nowrap;
}

.warn b {
  color: #e00b16;
}

.card {
  margin-left: 1px;
  width: 452px;
  height: 299px;
  box-sizing: border-box;
  border: 1px solid #bdbdbd;
  padding-left: 35px;
}

.card-head {
  height: 136px;
  box-sizing: border-box;
  display: flex;
  justify-content: space-between;
  padding: 21px 17px 0 36px;
}

.logo {
  width: 86px;
  height: 48px;
  margin-top: 2px;
}

.logo-name {
  font: 9.5px "Liberation Serif", serif;
  fill: #27336f;
}

.logo-cap {
  font-size: 13px;
}

.logo-health {
  font: bold 6.5px "Liberation Sans", sans-serif;
  fill: #2b3a86;
}

.secure-art {
  width: 80px;
  height: 53px;
}

.card-text {
  font: 12.75px/19px "Open Sans", sans-serif;
  color: #222;
}

.card-text p {
  margin: 0;
}

.card-text .p2 {
  margin-top: 13px;
}

.link {
  color: #800080;
  text-decoration: underline;
}

.card-text .more {
  margin-top: 28px;
  font-size: 11.4px;
  color: #777;
  text-decoration: underline;
}

.scrollbar {
  width: 15px;
  flex: none;
  margin: 11px 8px 11px 0;
  display: flex;
  flex-direction: column;
  background: #f0f0f0;
}

.sb-btn {
  height: 14px;
  flex: none;
  box-sizing: border-box;
  border: 1px solid #8c8c8c;
  background: #fff;
  display: flex;
  align-items: center;
  justify-content: center;
}

.sb-btn svg {
  width: 9px;
  height: 5px;
}

.sb-thumb {
  height: 246px;
  flex: none;
  box-sizing: border-box;
  border: 1px solid #8c8c8c;
  border-top: 0;
  background: #fff;
}

.sb-track {
  flex: 1;
}

.watermark {
  position: absolute;
  left: 1037px;
  top: 309px;
  width: 210px;
  height: 64px;
}

.wm-text {
  font: 48px "Liberation Sans", sans-serif;
  fill: #f0f0f0;
  stroke: #e2e2e2;
  stroke-width: 1;
}

/* taskbar */
.taskbar {
  height: 40px;
  flex: none;
  background: #04141f;
  display: flex;
  align-items: stretch;
  color: #fff;
}

.start {
  width: 48px;
  display: flex;
  align-items: center;
  justify-content: center;
}

.start svg {
  width: 16px;
  height: 16px;
}

.search {
  width: 288px;
  box-sizing: border-box;
  border: 1px solid #c9c9c9;
  border-width: 1px 1px 1px 0;
  background: #f0f0f0;
  display: flex;
  align-items: center;
  gap: 11px;
  padding-left: 12px;
  font-size: 14px;
  color: #222;
}

.search svg {
  width: 16px;
  height: 16px;
}

.task-apps {
  display: flex;
  gap: 1px;
}

.app {
  width: 48px;
  display: flex;
  align-items: center;
  justify-content: center;
  box-sizing: border-box;
}

.app-edge {
  margin-left: 2px;
}

.app-svg {
  width: 16px;
  height: 16px;
}

.big-app {
  width: 24px;
  height: 24px;
}

.folder {
  width: 24px;
  height: 22px;
}

.app-active {
  background: #2c3e4b;
  border-bottom: 2px solid #76b9ed;
}

.tray {
  margin-left: auto;
  display: flex;
  align-items: center;
  padding-right: 2px;
}

.tray-i {
  width: 16px;
  height: 16px;
  margin-right: 8px;
}

.tray-ol {
  width: 18px;
  height: 18px;
  margin-right: 7px;
}

.clock {
  width: 56px;
  padding-top: 2px;
  display: flex;
  flex-direction: column;
  align-items: center;
  line-height: 18px;
  font-size: 11.4px;
}

.notify {
  width: 16px;
  height: 14px;
  margin: 0 23px 0 16px;
}
</style>
